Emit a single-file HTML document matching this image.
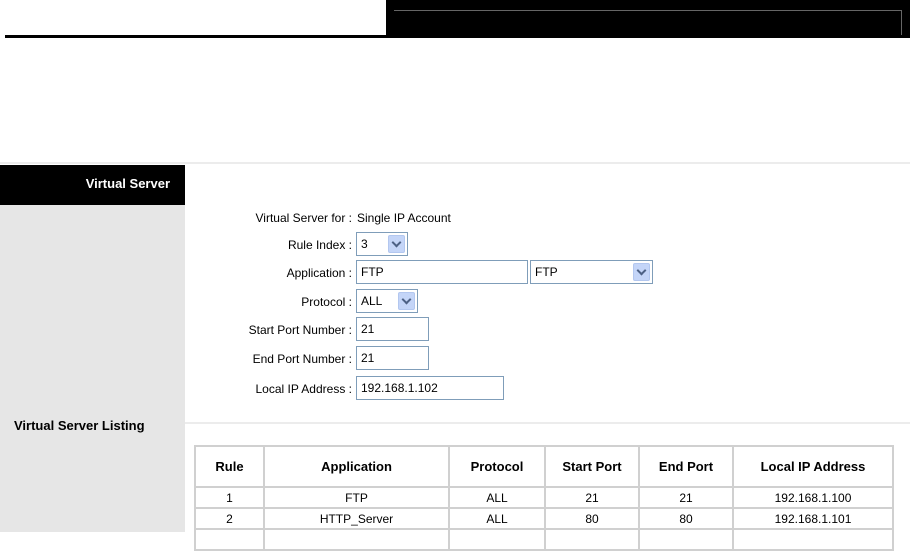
<!DOCTYPE html>
<html><head><meta charset="utf-8"><style>
*{margin:0;padding:0;box-sizing:border-box}
body{width:910px;height:532px;background:#fff;position:relative;overflow:hidden;font-family:"Liberation Sans",sans-serif;font-size:12px;color:#000}
.a{position:absolute}
.lbl{position:absolute;right:558px;text-align:right;white-space:nowrap;line-height:14px}
.inp{position:absolute;border:1px solid #7f9db9;background:#fff;height:24px;padding:3px 0 0 4px;line-height:16px;white-space:nowrap}
.sel{position:absolute;border:1px solid #7f9db9;background:#fff;height:24px;padding:3px 0 0 4px;line-height:16px}
.btn{position:absolute;right:2px;top:2px;width:17px;height:18px;background:#c4d5f8;border:1px solid #b3c7ef;border-radius:2px}
.btn:after{content:"";position:absolute;left:4px;top:3px;width:5px;height:5px;border-right:2px solid #4d6185;border-bottom:2px solid #4d6185;transform:rotate(45deg)}
table{position:absolute;left:194px;top:445px;width:700px;border-collapse:collapse}
td{border:2px solid #d0d0d0;text-align:center;height:21px;font-size:12px;line-height:14px}
tr.h td{height:41px;font-weight:bold;font-size:13px}
</style></head><body>
<div class="a" style="left:386px;top:0;width:524px;height:38px;background:#000"></div>
<div class="a" style="left:5px;top:35px;width:382px;height:3px;background:#000"></div>
<div class="a" style="left:394px;top:10px;width:508px;height:1px;background:#666"></div>
<div class="a" style="left:901px;top:10px;width:1px;height:25px;background:#666"></div>

<div class="a" style="left:0;top:162px;width:910px;height:2px;background:#ececec"></div>
<div class="a" style="left:0;top:165px;width:185px;height:40px;background:#000;color:#fff;font-weight:bold;font-size:13px;text-align:right;padding:11px 15px 0 0">Virtual Server</div>
<div class="a" style="left:0;top:205px;width:185px;height:327px;background:#e6e6e6"></div>
<div class="a" style="left:185px;top:422px;width:725px;height:2px;background:#ececec"></div>
<div class="a" style="left:14px;top:418px;font-weight:bold;font-size:13px">Virtual Server Listing</div>

<div class="lbl" style="top:211px">Virtual Server for :</div>
<div class="a" style="left:357px;top:211px">Single IP Account</div>
<div class="lbl" style="top:238px">Rule Index :</div>
<div class="sel" style="left:356px;top:232px;width:52px">3<div class="btn"></div></div>
<div class="lbl" style="top:266px">Application :</div>
<div class="inp" style="left:356px;top:260px;width:172px">FTP</div>
<div class="sel" style="left:530px;top:260px;width:123px">FTP<div class="btn"></div></div>
<div class="lbl" style="top:295px">Protocol :</div>
<div class="sel" style="left:356px;top:289px;width:62px">ALL<div class="btn"></div></div>
<div class="lbl" style="top:323px">Start Port Number :</div>
<div class="inp" style="left:356px;top:317px;width:73px">21</div>
<div class="lbl" style="top:352px">End Port Number :</div>
<div class="inp" style="left:356px;top:346px;width:73px">21</div>
<div class="lbl" style="top:382px">Local IP Address :</div>
<div class="inp" style="left:356px;top:376px;width:148px">192.168.1.102</div>

<table>
<tr class="h"><td style="width:69px">Rule</td><td style="width:185px">Application</td><td style="width:96px">Protocol</td><td style="width:94px">Start Port</td><td style="width:94px">End Port</td><td>Local IP Address</td></tr>
<tr><td>1</td><td>FTP</td><td>ALL</td><td>21</td><td>21</td><td>192.168.1.100</td></tr>
<tr><td>2</td><td>HTTP_Server</td><td>ALL</td><td>80</td><td>80</td><td>192.168.1.101</td></tr>
<tr><td>&nbsp;</td><td></td><td></td><td></td><td></td><td></td></tr>
</table>
</body></html>
